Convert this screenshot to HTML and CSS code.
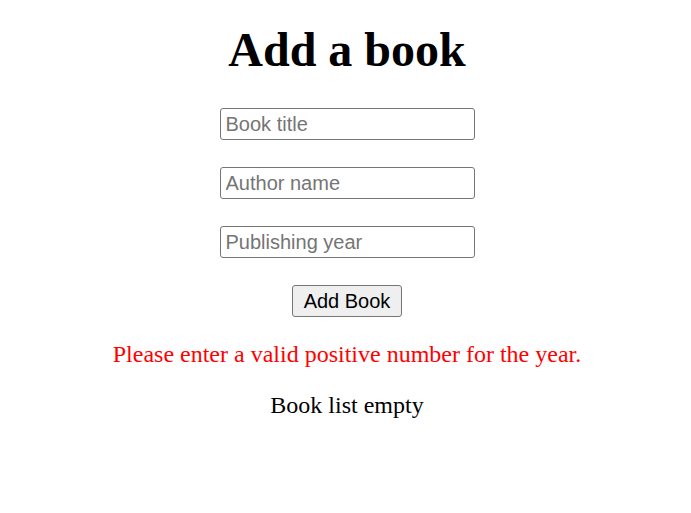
FILE: index.html
```html
<!DOCTYPE html>
<html>
<head>
<meta charset="utf-8">
<link rel="stylesheet" href="styles.css">
</head>
<body>
<div class="app">
  <h1 class="title">Add a book</h1>
  <form class="form">
    <input class="field" type="text" placeholder="Book title">
    <input class="field" type="text" placeholder="Author name">
    <input class="field" type="text" placeholder="Publishing year">
    <button class="btn" type="button">Add Book</button>
  </form>
  <p class="error">Please enter a valid positive number for the year.</p>
  <p class="empty">Book list empty</p>
</div>
</body>
</html>
```
FILE: styles.css
```css
html, body {
  margin: 0;
  padding: 0;
  background: #fff;
}
.app {
  display: flex;
  flex-direction: column;
  align-items: center;
  font-family: "Liberation Serif", "Times New Roman", serif;
  font-size: 24px;
  color: #000;
  padding-top: 22px;
  padding-left: 3px;
}
.title {
  margin: 0;
  font-size: 48px;
  font-weight: bold;
  line-height: 55px;
}
.form {
  margin-top: 31px;
  display: flex;
  flex-direction: column;
  align-items: center;
  gap: 27px;
}
.field {
  box-sizing: border-box;
  width: 255px;
  height: 32px;
  margin: 0;
  padding: 1px 5px;
  border: 1px solid #767676;
  border-radius: 3px;
  font-family: "Liberation Sans", Arial, sans-serif;
  font-size: 20px;
  color: #000;
  background: #fff;
}
.field::placeholder {
  color: #757575;
}
.btn {
  box-sizing: border-box;
  width: 110px;
  height: 32px;
  margin: 0;
  padding: 0 8px;
  border: 1px solid #767676;
  border-radius: 3px;
  background: #efefef;
  font-family: "Liberation Sans", Arial, sans-serif;
  font-size: 20px;
  color: #000;
}
.error {
  margin: 23px 0 0;
  color: #f00;
  line-height: 28px;
}
.empty {
  margin: 23px 0 0;
  line-height: 28px;
}
```
